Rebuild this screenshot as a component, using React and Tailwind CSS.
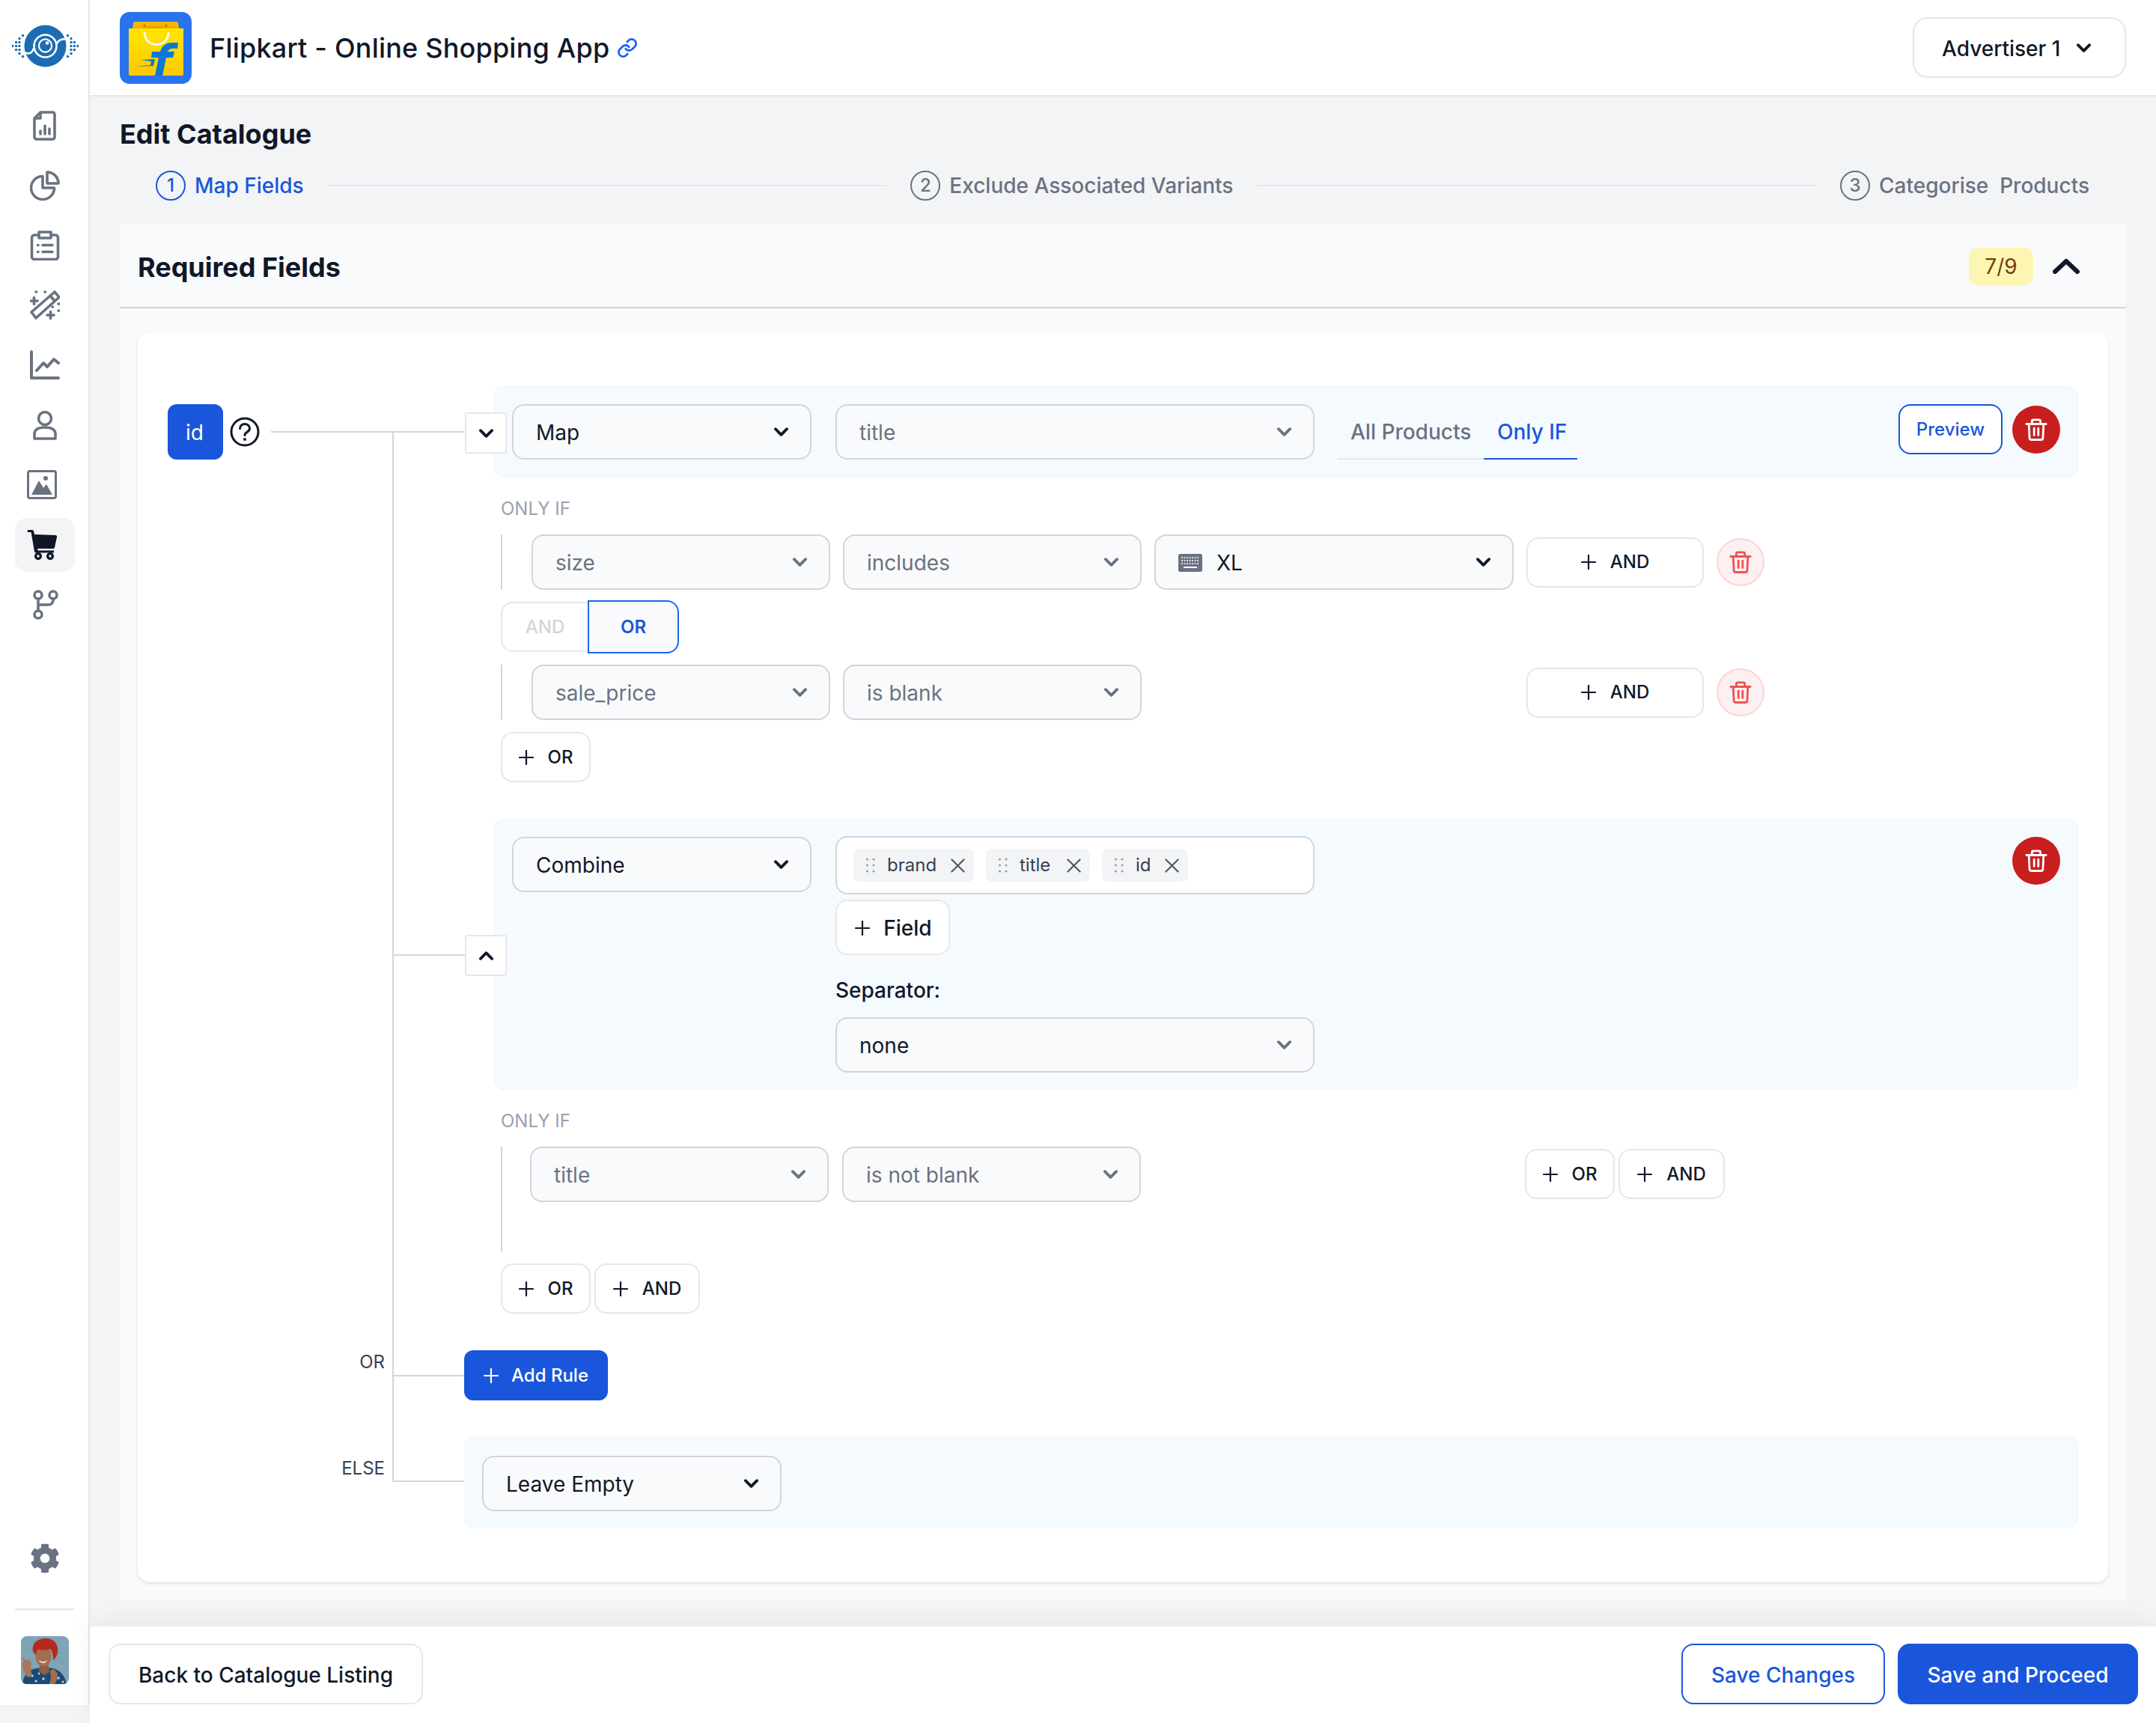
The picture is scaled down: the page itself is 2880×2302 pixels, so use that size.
import React from "react";
import { Link as LinkIcon } from "lucide-react";
import { FaCog } from "react-icons/fa";

const Chevron = ({ className = "text-gray-900" }) => (
  <svg viewBox="0 0 10 6" fill="none" className={"w-[19px] h-[12px] shrink-0 " + className}>
    <path d="m1 1 4 4 4-4" stroke="currentColor" strokeWidth="2" strokeLinecap="round" strokeLinejoin="round" />
  </svg>
);

const Plus = () => (
  <svg viewBox="0 0 20 20" fill="none" className="w-5 h-5 shrink-0">
    <path d="M10 1v18M1 10h18" stroke="currentColor" strokeWidth="2.2" strokeLinecap="round" />
  </svg>
);

const Trash = ({ className = "w-8 h-8" }) => (
  <svg viewBox="0 0 32 32" fill="none" className={className}>
    <path d="M2 8h28M10 7V4a2 2 0 0 1 2-2h8a2 2 0 0 1 2 2v3M5.5 8l1 20a2.5 2.5 0 0 0 2.5 2.4h14a2.5 2.5 0 0 0 2.5-2.4l1-20M13 14v10M19 14v10" stroke="currentColor" strokeWidth="3" strokeLinecap="round" strokeLinejoin="round" />
  </svg>
);

const Select = ({ label, w, muted, white, chevMuted, icon }) => (
  <div className={"h-[74px] shrink-0 rounded-2xl border-2 border-gray-300 flex items-center justify-between pl-[30px] pr-[29px] text-[28px] " + w + " " + (muted ? "text-gray-500 " : "text-gray-900 ") + (white ? "bg-white" : "bg-gray-50")}>
    <span className="flex items-center gap-[19px] pt-0.5">{icon}{label}</span>
    <Chevron className={chevMuted ? "text-gray-500" : "text-gray-900"} />
  </div>
);

const AddBtn = ({ label, w }) => (
  <button className={"h-[67px] shrink-0 rounded-2xl border-2 border-gray-200 bg-white flex items-center justify-center gap-[19px] text-2xl font-medium text-gray-900 " + w}>
    <Plus />
    <span>{label}</span>
  </button>
);

const SoftTrash = () => (
  <button className="w-[64px] h-[64px] shrink-0 rounded-full bg-[#fcf0f0] border-2 border-[#fbd5d5] flex items-center justify-center text-[#f05252]">
    <Trash className="w-[30px] h-[32px]" />
  </button>
);

const RedTrash = () => (
  <button className="w-16 h-16 shrink-0 rounded-full bg-[#c81e1e] flex items-center justify-center text-white">
    <Trash className="w-[30px] h-[32px]" />
  </button>
);

const Dots = () => (
  <svg viewBox="0 0 14 22" className="w-[14px] h-[22px] shrink-0 text-gray-400" fill="currentColor">
    <circle cx="2.5" cy="3" r="1.6" /><circle cx="11" cy="3" r="1.6" />
    <circle cx="2.5" cy="11" r="1.6" /><circle cx="11" cy="11" r="1.6" />
    <circle cx="2.5" cy="19" r="1.6" /><circle cx="11" cy="19" r="1.6" />
  </svg>
);

const Tag = ({ label, w }) => (
  <span className={"h-[44px] rounded-lg bg-gray-100 flex items-center pl-4 pr-3 text-2xl text-gray-700 shrink-0 " + w}>
    <Dots />
    <span className="ml-[15px]">{label}</span>
    <svg viewBox="0 0 20 20" fill="none" className="w-[19px] h-[19px] ml-auto text-gray-600"><path d="m1.5 1.5 17 17M18.5 1.5l-17 17" stroke="currentColor" strokeWidth="2.2" strokeLinecap="round" /></svg>
  </span>
);

const Keyboard = () => (
  <svg viewBox="0 0 32 24" className="w-8 h-6 shrink-0 text-gray-500">
    <rect x="0" y="0" width="32" height="24" rx="2.5" fill="currentColor" />
    <path d="M4 5h24M4 9h24M4 13h24" stroke="#fff" strokeWidth="1.6" strokeDasharray="2 1.5" />
    <path d="M7 18h18" stroke="#fff" strokeWidth="2" />
  </svg>
);

const StepCircle = ({ n, active }) => (
  <span className={"w-10 h-10 rounded-full border-2 flex items-center justify-center text-2xl shrink-0 " + (active ? "border-[#1a56db] text-[#1a56db]" : "border-gray-500 text-gray-500")}>{n}</span>
);

const Icon = ({ children, active }) => (
  <div className={"w-20 h-[72px] rounded-2xl flex items-center justify-center shrink-0 " + (active ? "bg-gray-100 text-gray-900" : "text-gray-500")}>
    {children}
  </div>
);

const sw = { fill: "none", stroke: "currentColor", strokeWidth: 3.6, strokeLinecap: "round", strokeLinejoin: "round" };

const Logo = () => {
  const cols = [
    [0.8, [0]], [5.6, [-5, 0, 5]], [10, [-10, -5, 0, 5, 10]], [14.5, [-14, 14]],
    [74.5, [-14, 14]], [79, [-10, -5, 0, 5, 10]], [83.4, [-5, 0, 5]], [88, [0]],
  ];
  const dots = [];
  cols.forEach(([x, ys]) => ys.forEach((y) => dots.push([x, 28.5 + y])));
  return (
    <svg viewBox="0 0 89 57" className="w-[89px] h-[57px]">
      {dots.map(([x, y], i) => <circle key={i} cx={x} cy={y} r="1.7" fill="#1c6cb3" />)}
      <circle cx="44.5" cy="28.5" r="28" fill="#1c6cb3" />
      <circle cx="44.5" cy="28.5" r="15" fill="none" stroke="#fff" strokeWidth="2.6" />
      <path d="M17 37.5c6 2.2 10.5 0 12-6" fill="none" stroke="#fff" strokeWidth="2.6" />
      <path d="M59.5 26c2-5 6-7.5 13-7" fill="none" stroke="#fff" strokeWidth="2.6" />
      <circle cx="44.5" cy="28" r="8.6" fill="none" stroke="#fff" strokeWidth="2.2" />
      <circle cx="47" cy="24.5" r="2.3" fill="#fff" />
    </svg>
  );
};

const Flipkart = () => (
  <svg viewBox="0 0 96 96" className="w-24 h-24 shrink-0">
    <defs>
      <linearGradient id="fkb" x1="0" y1="0" x2="0" y2="1">
        <stop offset="0" stopColor="#ffe600" /><stop offset="1" stopColor="#ffc800" />
      </linearGradient>
      <radialGradient id="fkt" cx="0.5" cy="1" r="0.6">
        <stop offset="0" stopColor="#f58a00" /><stop offset="1" stopColor="#f8b800" />
      </radialGradient>
    </defs>
    <rect width="96" height="96" rx="13" fill="#2a73ef" />
    <path d="M17 22l1-7a2 2 0 0 1 2-2h56a2 2 0 0 1 2 2l1 7z" fill="url(#fkt)" />
    <circle cx="33" cy="18" r="1.6" fill="#a87900" /><circle cx="62" cy="18" r="1.6" fill="#a87900" />
    <path d="M12 22h73v61a2 2 0 0 1-2 2H14a2 2 0 0 1-2-2z" fill="url(#fkb)" />
    <path d="M33 27c0 22 32 22 32 0" fill="none" stroke="#fff" strokeWidth="2.6" />
    <path d="M47 85l5-24H42l1-8h11c2-8 8-12 15-12h9l-1 8c-7-1-12 0-13 4h9l-2 8h-9l-5 24z" fill="#0a78d6" />
    <path d="M18 73l23-2 1-5-14-2 19-1-2 9z" fill="#0a78d6" />
  </svg>
);

const Avatar = () => (
  <svg viewBox="0 0 64 64" className="w-16 h-16 rounded-lg shrink-0">
    <rect width="64" height="64" fill="#7ea3b4" />
    <path d="M0 12h64M0 26h64M0 40h64M0 54h64" stroke="#8bafbf" strokeWidth="0.8" />
    <path d="M2 64c1-10 6-17 14-20 6-2 18-3 26-1 10 2 17 10 19 21z" fill="#1c4a73" />
    <g fill="#bcd3e2"><circle cx="15" cy="53" r="1.8" /><circle cx="24" cy="50" r="1.4" /><circle cx="20" cy="60" r="1.6" /><circle cx="30" cy="57" r="1.8" /><circle cx="42" cy="52" r="1.6" /><circle cx="50" cy="56" r="1.8" /><circle cx="44" cy="61" r="1.4" /><circle cx="56" cy="61" r="1.6" /></g>
    <path d="M25 36h11l2 12-7 4-7-5z" fill="#8f5d42" />
    <ellipse cx="30" cy="27" rx="10.5" ry="13.5" fill="#a36d4f" />
    <path d="M16 20C14 8 24 3 33 3c10 0 18 7 16 19-1 5-3 8-6 10 0-7-1-12-4-15-6 2-12 2-16 0-2 2-2 4-3 8-2-1-3-3-4-5z" fill="#b5291f" />
    <path d="M24 32c3 3 8 3 11 0-1 5-10 5-11 0z" fill="#fff" />
    <path d="M0 27l7 5 4-1 3 6-1 8 2 8-6 2-6-9-1-9 2-5z" fill="#ab7558" />
    <path d="M39 46l5-2 5 6-1 8-3 6h-7l2-8z" fill="#a36d4f" />
  </svg>
);

export default function App() {
  return (
    <div className="[font-family:Inter,sans-serif] w-[2880px] h-[2302px] flex bg-gray-100 overflow-hidden text-gray-900">
      {/* Sidebar */}
      <aside className="w-[120px] h-[2278px] bg-white border-r-2 border-gray-200 flex flex-col items-center shrink-0 pl-0.5">
        <div className="h-[132px] w-full pl-[14px] pt-[33px] shrink-0"><Logo /></div>
        <div className="flex flex-col gap-2 items-center">
          <Icon><svg viewBox="0 0 40 40" className="w-10 h-10" {...sw}><path d="M14 2h16a3 3 0 0 1 3 3v30a3 3 0 0 1-3 3H9a3 3 0 0 1-3-3V10zM14 2v8H6" /><path d="M14 31v-4M20 31V20M26 31v-7" /></svg></Icon>
          <Icon><svg viewBox="0 0 40 40" className="w-10 h-10" {...sw}><path d="M17 7.5a15.5 15.5 0 1 0 15.5 15.5H17z" /><path d="M23 2a15 15 0 0 1 15 15H23z" /></svg></Icon>
          <Icon><svg viewBox="0 0 40 40" className="w-10 h-10" {...sw}><path d="M12 6H6a3.5 3.5 0 0 0-3.5 3.5V35A3.5 3.5 0 0 0 6 38.5h28a3.5 3.5 0 0 0 3.5-3.5V9.5A3.5 3.5 0 0 0 34 6h-6" /><path d="M12 2h16v8H12z" /><path d="M17 19.5h13M17 28.5h13M10.5 19.5h.5M10.5 28.5h.5" /></svg></Icon>
          <Icon><svg viewBox="0 0 40 40" className="w-10 h-10" {...sw}><path d="M2 29 33 2l6 7-31 28zM27 7l6 7" /><path d="M1 14h9M5.5 9.5v9M23 33h9M27.5 28.5v9M8 2h.5M20 2h.5M38 18h.5M30 22h.5M38 27h.5" /></svg></Icon>
          <Icon><svg viewBox="0 0 40 40" className="w-10 h-10" {...sw} strokeWidth="4"><path d="M2 2v35h36" /><path d="M9 27l9-10 5 5 9-10 6 5" /></svg></Icon>
          <Icon><svg viewBox="0 0 40 40" className="w-10 h-10" {...sw}><circle cx="20" cy="11" r="8.5" /><path d="M6 38v-6c0-6 5-9 14-9s14 3 14 9v6z" /></svg></Icon>
          <Icon><svg viewBox="0 0 40 40" className="w-10 h-10 -ml-2"><rect x="1.5" y="1.5" width="37" height="36" rx="2.5" fill="none" stroke="currentColor" strokeWidth="3" /><path d="M6 33 16 14l6 10 4-5 8 14z" fill="currentColor" /><circle cx="25" cy="11" r="3" fill="currentColor" /></svg></Icon>
          <Icon active><svg viewBox="0 0 40 40" className="w-10 h-10 -ml-2" fill="currentColor"><path d="M2 0h5a2 2 0 0 1 2 1.5L10 6l28 1a2 2 0 0 1 2 2.5l-3 14a2 2 0 0 1-2 1.5H14l.7 2.5H36v3H12a2 2 0 0 1-2-1.5L5.5 3H2a1.5 1.5 0 0 1 0-3z" /><circle cx="15" cy="35" r="3.4" fill="none" stroke="currentColor" strokeWidth="3.4" /><circle cx="31" cy="35" r="3.4" fill="none" stroke="currentColor" strokeWidth="3.4" /></svg></Icon>
          <Icon><svg viewBox="0 0 40 40" className="w-10 h-10" {...sw}><circle cx="11" cy="7" r="5" /><circle cx="11" cy="33" r="5" /><circle cx="31" cy="7" r="5" /><path d="M11 12v16M31 12v2a6 6 0 0 1-6 6H11" /></svg></Icon>
        </div>
        <div className="mt-auto flex flex-col items-center w-full shrink-0">
          <FaCog className="w-10 h-10 text-gray-500" />
          <div className="w-20 h-0.5 bg-gray-200 mt-[47px]" />
          <div className="mt-[35px] mb-[28px]"><Avatar /></div>
        </div>
      </aside>

      {/* Main */}
      <div className="flex-1 flex flex-col min-w-0">
        <header className="h-[129px] shrink-0 bg-white border-b-2 border-gray-200 flex items-center pl-10 pr-10">
          <Flipkart />
          <h1 className="ml-6 pt-px text-[36px] leading-[44px] font-medium tracking-[0.2px] text-gray-900">Flipkart - Online Shopping App</h1>
          <LinkIcon className="ml-[10px] w-7 h-7 text-[#1c64f2]" strokeWidth={2.4} />
          <button className="ml-auto w-[285px] h-[81px] rounded-[20px] border-2 border-gray-200 bg-white flex items-center pl-[37px] gap-[22px] text-[28px] font-medium">
            <span className="pt-0.5">Advertiser 1</span>
            <Chevron />
          </button>
        </header>

        <main className="flex-1 min-h-0 px-10 pt-[28px]">
          <h2 className="text-[36px] leading-[44px] font-bold">Edit Catalogue</h2>
          <div className="mt-[27px] h-10 pl-12 pr-[49px] flex items-center gap-8 text-[28px] font-medium text-gray-500">
            <div className="flex items-center gap-3 text-[#1a56db] shrink-0"><StepCircle n="1" active /><span>Map Fields</span></div>
            <div className="flex-1 h-0.5 bg-gray-200" />
            <div className="flex items-center gap-3 shrink-0"><StepCircle n="2" /><span>Exclude Associated Variants</span></div>
            <div className="flex-1 h-0.5 bg-gray-200" />
            <div className="flex items-center gap-3 shrink-0 whitespace-pre"><StepCircle n="3" /><span>Categorise  Products</span></div>
          </div>

          <section className="mt-8 bg-gray-50 pb-6">
            <div className="h-[112px] border-b-2 border-gray-300 px-6 flex items-center justify-between">
              <h3 className="pt-[3px] text-[36px] leading-[44px] font-bold">Required Fields</h3>
              <div className="flex items-center pr-[38px]">
                <span className="mt-0.5 w-[86px] h-[50px] rounded-xl bg-[#fdf6b2] text-[#723b13] text-[28px] flex items-center justify-center">7/9</span>
                <svg viewBox="0 0 36 21" fill="none" className="ml-[26px] w-9 h-[21px] text-gray-900"><path d="M3 18 18 4l15 14" stroke="currentColor" strokeWidth="6" strokeLinecap="round" strokeLinejoin="round" /></svg>
              </div>
            </div>

            <div className="relative mx-6 mt-8 bg-white rounded-2xl shadow-[0_2px_4px_rgba(0,0,0,0.1)] px-10 pt-[72px] pb-[72px]">
              {/* tree trunk */}
              <div className="absolute left-[340px] top-[132px] w-0.5 h-[1404px] bg-gray-300" />

              {/* Rule 1 */}
              <div className="flex">
                <div className="w-[396px] shrink-0 h-[122px] flex items-center">
                  <span className="w-[74px] h-[74px] rounded-xl bg-[#1a56db] text-white text-[28px] pt-0.5 pr-0.5 flex items-center justify-center shrink-0">id</span>
                  <svg viewBox="0 0 40 40" fill="none" className="ml-[9px] w-10 h-10 shrink-0"><circle cx="20" cy="20" r="18" stroke="#111827" strokeWidth="3" /><path d="M13.5 15.5c0-3.5 3-6 6.5-6s6.5 2.5 6.5 5.7c0 3-2 4.3-3.8 5.4-1.8 1.1-2.7 2-2.7 4" stroke="#111827" strokeWidth="3" strokeLinecap="round" /><circle cx="20" cy="30" r="2" fill="#111827" /></svg>
                  <div className="ml-[15px] flex-1 h-0.5 bg-gray-300" />
                </div>
                <div className="flex-1 pl-10 min-w-0">
                  <div className="relative h-[122px] rounded-xl bg-[#f5faff] border border-[#f1f5f9] p-[23px] flex items-start">
                    <button className="absolute -left-10 top-[34px] w-14 h-[55px] bg-white border-2 border-gray-200 rounded-[3px] flex items-center justify-center"><Chevron /></button>
                    <Select label="Map" w="w-[400px]" />
                    <div className="ml-8"><Select label="title" w="w-[640px]" muted chevMuted /></div>
                    <div className="ml-[31px] h-[74px] flex text-[28px] font-medium">
                      <span className="w-[195px] pl-[17px] pt-0.5 flex items-center border-b-2 border-gray-200 text-gray-500">All Products</span>
                      <span className="w-[125px] pl-[18px] pt-0.5 flex items-center border-b-2 border-[#1a56db] text-[#1a56db]">Only IF</span>
                    </div>
                    <div className="ml-auto flex items-start gap-[13px]">
                      <button className="w-[139px] h-[67px] rounded-2xl border-2 border-[#1a56db] bg-white text-2xl font-medium text-[#1a56db]">Preview</button>
                      <div className="mt-0.5"><RedTrash /></div>
                    </div>
                  </div>
                  <div className="pl-[9px]">
                    <div className="mt-[26px] text-2xl text-gray-400">ONLY IF</div>
                    <div className="mt-[18px] flex items-center gap-[17px] border-l-2 border-gray-300 pl-[39px]">
                      <Select label="size" w="w-[399px]" muted chevMuted />
                      <Select label="includes" w="w-[399px]" muted chevMuted />
                      <Select label="XL" w="w-[480px]" icon={<Keyboard />} />
                      <AddBtn label="AND" w="w-[237px]" />
                      <SoftTrash />
                    </div>
                    <div className="mt-[14px] flex items-center h-[71px]">
                      <span className="w-[116px] h-[67px] rounded-l-2xl border-2 border-r-0 border-gray-200 text-2xl font-medium text-gray-300 flex items-center justify-center">AND</span>
                      <span className="w-[122px] h-[71px] rounded-r-2xl border-2 border-[#1c64f2] bg-gray-50 text-2xl font-semibold text-[#1a56db] flex items-center justify-center">OR</span>
                    </div>
                    <div className="mt-[15px] flex items-center gap-[17px] border-l-2 border-gray-300 pl-[39px]">
                      <Select label="sale_price" w="w-[399px]" muted chevMuted />
                      <Select label="is blank" w="w-[399px]" muted chevMuted />
                      <div className="w-[480px] shrink-0" />
                      <AddBtn label="AND" w="w-[237px]" />
                      <SoftTrash />
                    </div>
                    <div className="mt-4"><AddBtn label="OR" w="w-[120px]" /></div>
                  </div>
                </div>
              </div>

              {/* Rule 2 */}
              <div className="flex mt-[49px]">
                <div className="w-[396px] shrink-0" />
                <div className="flex-1 pl-10 min-w-0">
                  <div className="relative rounded-xl bg-[#f5faff] border border-[#f1f5f9] pt-[23px] px-[23px] pb-[22px] flex items-start">
                    <div className="absolute left-[-136px] top-[180px] w-[96px] h-0.5 bg-gray-300" />
                    <button className="absolute -left-10 top-[154px] w-14 h-[55px] bg-white border-2 border-gray-200 rounded-[3px] flex items-center justify-center"><Chevron className="text-gray-900 rotate-180" /></button>
                    <Select label="Combine" w="w-[400px]" />
                    <div className="ml-8 w-[640px] shrink-0">
                      <div className="-mt-px h-[78px] rounded-2xl border-2 border-gray-300 bg-white flex items-center pl-[22px] gap-4">
                        <Tag label="brand" w="w-[161px]" />
                        <Tag label="title" w="w-[139px]" />
                        <Tag label="id" w="w-[115px]" />
                      </div>
                      <button className="mt-[7px] w-[153px] h-[74px] pt-0.5 pl-0.5 rounded-2xl border-2 border-gray-200 bg-white flex items-center justify-center gap-[18px] text-[28px] font-medium"><Plus />Field</button>
                      <div className="mt-[27px] h-10 text-[28px] leading-10 font-medium">Separator:</div>
                      <div className="mt-4"><Select label="none" w="w-[640px]" chevMuted /></div>
                    </div>
                    <div className="ml-auto"><RedTrash /></div>
                  </div>
                  <div className="pl-[9px]">
                    <div className="mt-[26px] text-2xl text-gray-400">ONLY IF</div>
                    <div className="mt-[18px] h-[140px] flex items-start gap-[18px] border-l-2 border-gray-300 pl-[37px]">
                      <Select label="title" w="w-[399px]" muted chevMuted />
                      <Select label="is not blank" w="w-[399px]" muted chevMuted />
                      <div className="ml-[495px] mt-[3px] flex gap-[5px]">
                        <AddBtn label="OR" w="w-[120px]" />
                        <AddBtn label="AND" w="w-[142px]" />
                      </div>
                    </div>
                    <div className="mt-4 flex gap-[5px]">
                      <AddBtn label="OR" w="w-[120px]" />
                      <AddBtn label="AND" w="w-[141px]" />
                    </div>
                  </div>
                </div>
              </div>

              {/* Add Rule */}
              <div className="flex mt-[49px]">
                <div className="w-[396px] shrink-0 flex justify-end items-start">
                  <span className="text-2xl text-gray-700">OR</span>
                  <div className="ml-[11px] mt-[33px] w-[95px] h-0.5 bg-gray-300" />
                </div>
                <button className="w-[192px] h-[67px] rounded-xl bg-[#1a56db] text-white text-2xl font-medium flex items-center justify-center gap-[17px]"><Plus />Add Rule</button>
              </div>

              {/* Else */}
              <div className="flex mt-[49px]">
                <div className="w-[396px] shrink-0 flex justify-end items-start">
                  <span className="text-2xl mt-[26px] text-gray-700">ELSE</span>
                  <div className="ml-[11px] mt-[58px] w-[95px] h-0.5 bg-gray-300" />
                </div>
                <div className="flex-1 h-[122px] rounded-xl bg-[#f5faff] border border-[#f1f5f9] pl-[23px] pt-[24px]">
                  <Select label="Leave Empty" w="w-[400px]" />
                </div>
              </div>
            </div>
          </section>
        </main>

        <footer className="relative h-[129px] shrink-0 bg-white shadow-[0_-6px_30px_rgba(0,0,0,0.06)] flex items-center pl-[25px] pr-6 pb-0.5">
          <button className="w-[420px] h-[81px] pt-0.5 rounded-2xl border-2 border-gray-200 text-[28px] font-medium">Back to Catalogue Listing</button>
          <button className="ml-auto w-[272px] h-[81px] pt-0.5 rounded-2xl border-2 border-[#1a56db] text-[#1a56db] text-[28px] font-medium">Save Changes</button>
          <button className="ml-[17px] w-[321px] h-[81px] pt-0.5 rounded-2xl bg-[#1a56db] text-white text-[28px] font-medium">Save and Proceed</button>
        </footer>
      </div>
    </div>
  );
}
